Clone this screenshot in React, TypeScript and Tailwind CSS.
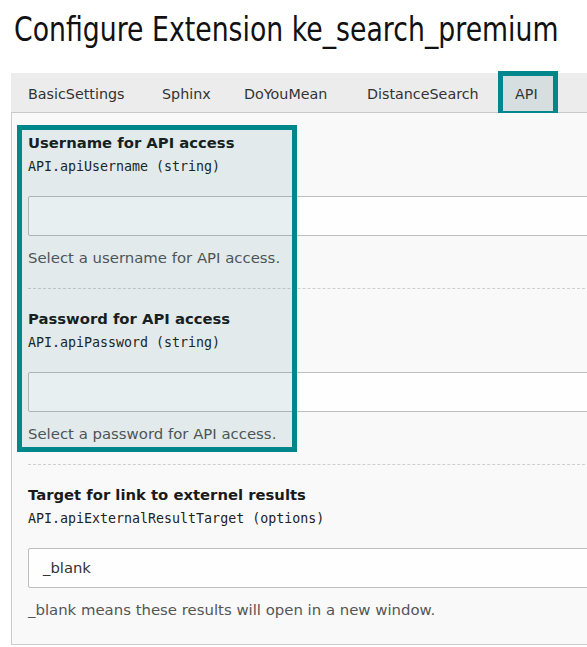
const TABS = [
  { name: 'BasicSettings', w: 'w-[134px]' },
  { name: 'Sphinx', w: 'w-[82px]' },
  { name: 'DoYouMean', w: 'w-[123px]' },
  { name: 'DistanceSearch', w: 'w-[148px]' },
  { name: 'API', w: 'w-[60px]' },
];

const sans = "font-['DejaVu_Sans',Verdana,sans-serif]";
const mono = "font-['DejaVu_Sans_Mono','Liberation_Mono',monospace]";

function Field({
  label,
  path,
  value,
  help,
  last,
}: {
  label: string;
  path: string;
  value?: string;
  help: string;
  last?: boolean;
}) {
  return (
    <div className={`pt-[20px] ${last ? 'pb-[24px]' : 'border-b border-dashed border-[#cfcfcf] pb-[20px]'}`}>
      <div className="h-[20px] text-[14.8px] font-bold leading-[20px] text-[#1a1a1a]">{label}</div>
      <div className={`${mono} mt-[4px] h-[20px] text-[13.3px] leading-[20px] text-[#222]`}>{path}</div>
      <div className="mt-[19px] flex h-[40px] w-[600px] items-center rounded-[2px] border border-[#bdbdbd] bg-[#fefefe] px-[14px] text-[14.8px] text-[#333]">
        {value}
      </div>
      <div className="mt-[12px] h-[20px] whitespace-nowrap text-[14.9px] leading-[20px] text-[#555]">{help}</div>
    </div>
  );
}

export default function App() {
  return (
    <div className={`${sans} h-[647px] w-[587px] overflow-hidden bg-white`}>
      {/* condensed heading face: squeeze DejaVu horizontally */}
      <h1 className="h-[50px] whitespace-nowrap pl-[14px] pt-[10px] text-[33px] leading-[40px] text-[#111]">
        <span className="inline-block origin-left scale-x-[0.81]">Configure Extension ke_search_premium</span>
      </h1>

      {/* tab strip */}
      <div className="relative ml-[11px] mt-[23px] flex h-[40px] w-[600px] border-b border-[#c8c8c8] bg-[#ececec]">
        {TABS.map(t => (
          <div key={t.name} className={`flex h-full items-center pl-[17px] pt-[4px] text-[14.3px] text-[#333] ${t.w}`}>
            {t.name}
          </div>
        ))}
        <div className="absolute left-[487px] top-[-2px] h-[45px] w-[60px] border-[5px] border-[#00878c] bg-[rgba(0,90,100,0.09)]" />
      </div>

      {/* settings panel */}
      <div className="relative ml-[11px] w-[600px] border-b border-l border-[#cccccc] bg-[#f9f9f9] px-[16px]">
        <Field
          label="Username for API access"
          path="API.apiUsername (string)"
          help="Select a username for API access."
        />
        <Field
          label="Password for API access"
          path="API.apiPassword (string)"
          help="Select a password for API access."
        />
        <Field
          label="Target for link to externel results"
          path="API.apiExternalResultTarget (options)"
          value="_blank"
          help="_blank means these results will open in a new window."
          last
        />
        {/* highlight over the first two fields */}
        <div className="absolute left-[5px] top-[12px] h-[327px] w-[280px] border-[5px] border-[#00878c] bg-[rgba(0,90,100,0.09)]" />
      </div>
    </div>
  );
}
